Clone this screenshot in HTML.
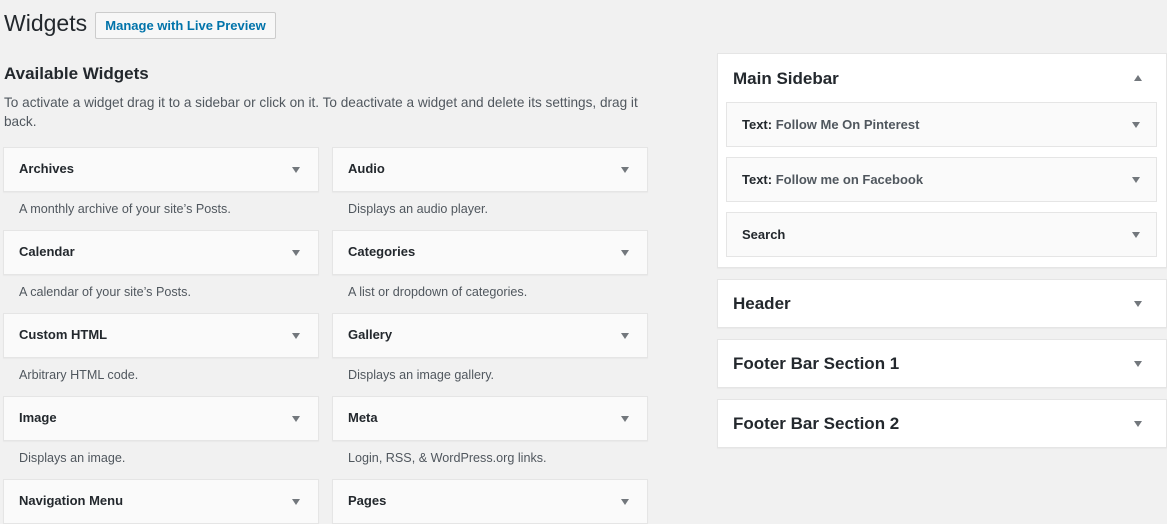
<!DOCTYPE html>
<html><head><style>
body{margin:0;width:1167px;height:522px;background:#f1f1f1;font-family:"Liberation Sans",sans-serif;color:#23282d;position:relative;overflow:hidden}
.a{position:absolute}
.w{position:absolute;width:314px;height:43px;background:#fafafa;border:1px solid #e5e5e5;box-shadow:0 1px 1px rgba(0,0,0,.04)}
.w b{position:absolute;left:15px;top:13px;font-size:13px;font-weight:bold;color:#23282d}
.arr{position:absolute;width:0;height:0;border-left:4.5px solid transparent;border-right:4.5px solid transparent;border-top:6px solid #72777c}
.w .arr{right:18px;top:19px}
.d{position:absolute;font-size:12.6px;color:#50575e}
.s{position:absolute;left:717px;width:448px;background:#fff;border:1px solid #e5e5e5;box-shadow:0 1px 1px rgba(0,0,0,.04)}
.s h3{margin:0;position:absolute;left:15px;font-size:17px;font-weight:bold;color:#23282d}
.s .arr{right:24px}
.i{position:absolute;left:8px;width:429px;height:43px;background:#fafafa;border:1px solid #e5e5e5}
.i span{position:absolute;left:15px;top:14px;font-size:13px;font-weight:bold;color:#23282d}
.i em{font-style:normal;color:#50575e}
.i .arr{right:16px;top:19px}
</style></head><body>
<div class="a" style="left:4px;top:10px;font-size:23px;color:#23282d">Widgets</div>
<div class="a" style="left:95px;top:12px;width:179px;height:25px;border:1px solid #ccc;background:#f7f7f7;border-radius:2px;font-size:13px;color:#0073aa;font-weight:bold;text-align:center;line-height:25px">Manage with Live Preview</div>
<div class="a" style="left:4px;top:64px;font-size:17px;font-weight:bold">Available Widgets</div>
<div class="a" style="left:4px;top:93px;width:655px;font-size:13.6px;color:#50575e;line-height:19px">To activate a widget drag it to a sidebar or click on it. To deactivate a widget and delete its settings, drag it back.</div>

<div class="w" style="left:3px;top:147px"><b>Archives</b><i class="arr"></i></div>
<div class="w" style="left:332px;top:147px"><b>Audio</b><i class="arr"></i></div>
<div class="d" style="left:19px;top:202px">A monthly archive of your site’s Posts.</div>
<div class="d" style="left:348px;top:202px">Displays an audio player.</div>

<div class="w" style="left:3px;top:230px"><b>Calendar</b><i class="arr"></i></div>
<div class="w" style="left:332px;top:230px"><b>Categories</b><i class="arr"></i></div>
<div class="d" style="left:19px;top:285px">A calendar of your site’s Posts.</div>
<div class="d" style="left:348px;top:285px">A list or dropdown of categories.</div>

<div class="w" style="left:3px;top:313px"><b>Custom HTML</b><i class="arr"></i></div>
<div class="w" style="left:332px;top:313px"><b>Gallery</b><i class="arr"></i></div>
<div class="d" style="left:19px;top:368px">Arbitrary HTML code.</div>
<div class="d" style="left:348px;top:368px">Displays an image gallery.</div>

<div class="w" style="left:3px;top:396px"><b>Image</b><i class="arr"></i></div>
<div class="w" style="left:332px;top:396px"><b>Meta</b><i class="arr"></i></div>
<div class="d" style="left:19px;top:451px">Displays an image.</div>
<div class="d" style="left:348px;top:451px">Login, RSS, &amp; WordPress.org links.</div>

<div class="w" style="left:3px;top:479px"><b>Navigation Menu</b><i class="arr"></i></div>
<div class="w" style="left:332px;top:479px"><b>Pages</b><i class="arr"></i></div>

<div class="s" style="top:53px;height:213px">
<h3 style="top:15px">Main Sidebar</h3>
<i class="arr" style="top:21px;border-top:none;border-bottom:6px solid #72777c"></i>
<div class="i" style="top:48px"><span>Text: <em>Follow Me On Pinterest</em></span><i class="arr"></i></div>
<div class="i" style="top:103px"><span>Text: <em>Follow me on Facebook</em></span><i class="arr"></i></div>
<div class="i" style="top:158px"><span>Search</span><i class="arr"></i></div>
</div>
<div class="s" style="top:279px;height:47px"><h3 style="top:14px">Header</h3><i class="arr" style="top:21px"></i></div>
<div class="s" style="top:339px;height:47px"><h3 style="top:14px">Footer Bar Section 1</h3><i class="arr" style="top:21px"></i></div>
<div class="s" style="top:399px;height:47px"><h3 style="top:14px">Footer Bar Section 2</h3><i class="arr" style="top:21px"></i></div>
</body></html>
